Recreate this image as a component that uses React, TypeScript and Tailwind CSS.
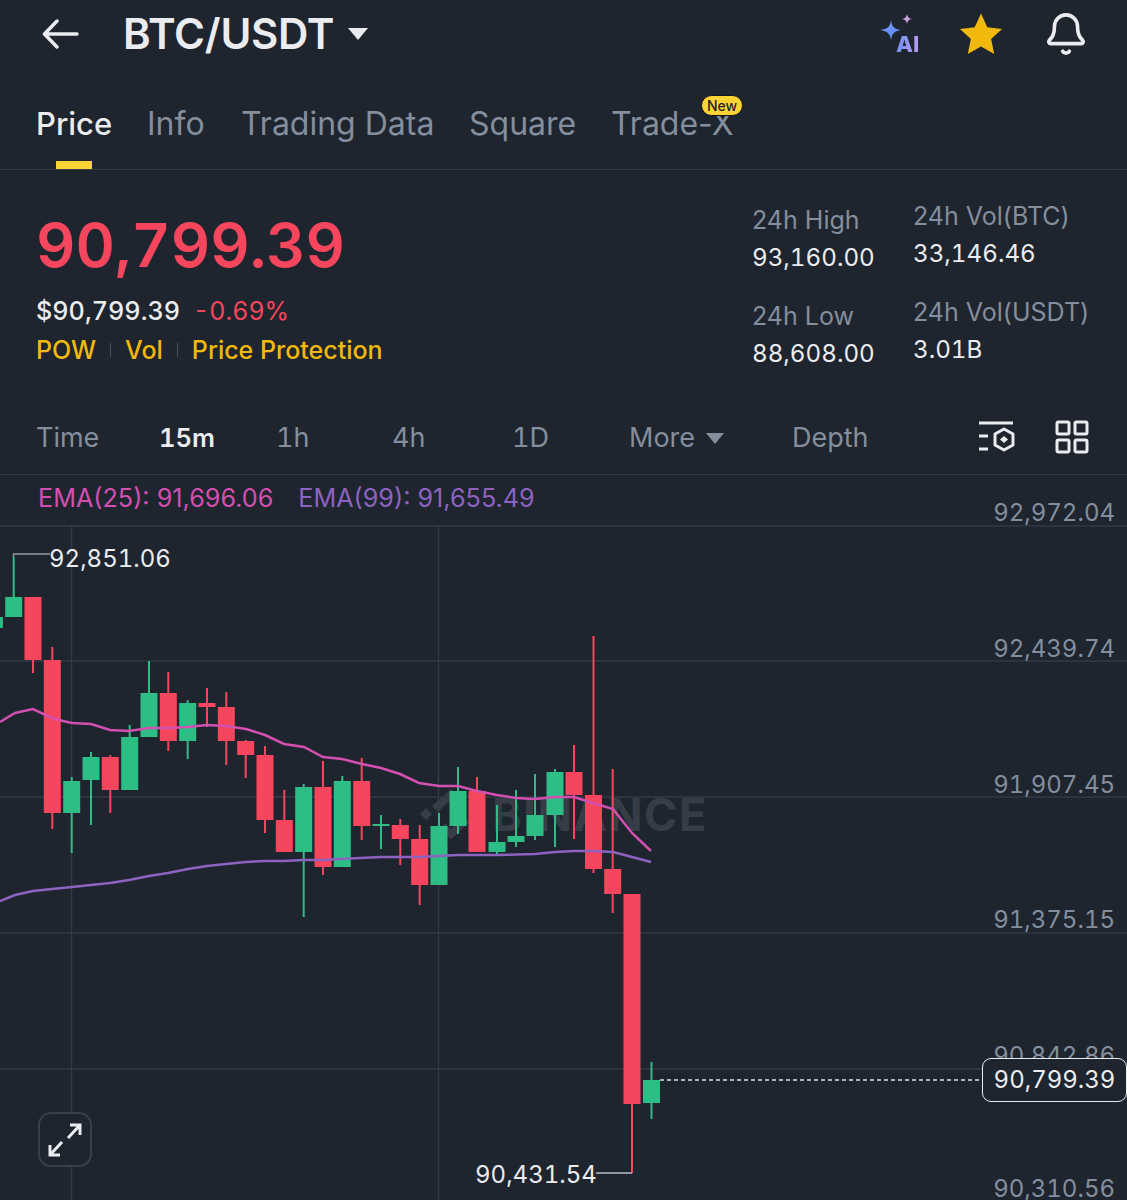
import React from 'react';
import { Bell } from 'lucide-react';

type Candle = [number, number, number, number, number];

// x centre, high, body top, body bottom, low -> all in page pixels
const greens: Candle[] = [
  [-5.6, 617, 617, 628, 628],
  [13.7, 557, 597, 617, 617],
  [71.7, 777, 781, 813, 853],
  [91, 752, 757, 780, 825],
  [129.7, 725, 737, 790, 790],
  [149, 661, 693, 737, 737],
  [187.7, 700, 703, 741, 759],
  [303.7, 784, 787, 852, 917],
  [342.3, 776, 781, 867, 867],
  [381, 815, 824, 826, 849],
  [439, 813, 826, 885, 885],
  [458, 767, 791, 826, 834],
  [497, 805, 842, 852, 855],
  [516, 790, 836, 842, 847],
  [535, 774, 815, 836, 840],
  [555, 769, 772, 815, 847],
  [651.5, 1062, 1080, 1103, 1119],
];

const reds: Candle[] = [
  [33, 597, 597, 660, 673],
  [52.3, 647, 660, 813, 829],
  [110.3, 755, 757, 790, 813],
  [168.3, 672, 693, 741, 751],
  [207, 688, 703, 707, 727],
  [226.3, 692, 707, 741, 765],
  [245.7, 740, 741, 755, 778],
  [265, 746, 755, 820, 833],
  [284.3, 790, 820, 852, 852],
  [323, 761, 787, 867, 875],
  [361.7, 758, 781, 826, 840],
  [400.3, 819, 825, 839, 865],
  [419.7, 825, 839, 885, 905],
  [477, 777, 791, 852, 852],
  [574, 745, 772, 795, 839],
  [593.5, 636, 795, 869, 873],
  [612.7, 769, 869, 894, 913],
  [632, 894, 894, 1104, 1173],
];

const ema25 =
  '0,722 15,713 33,709 52,718 63,721 72,723 91,724 110,730 129,731 149,728 168,728 188,727 207,725 226,726 246,729 265,735 284,744 304,747 323,757 342,759 362,764 381,768 400,774 419,783 439,786 458,786 477,791 497,795 516,798 535,799 555,797 574,797 593,803 613,809 632,833 651,851';
const ema99 =
  '0,901 15,895 33,891 52,889 72,887 91,885 110,883 129,880 149,876 168,873 188,869 207,866 226,864 246,862 265,861 284,861 304,860 323,860 340,859 381,857 419,857 458,855 497,855 535,854 555,852 574,851 593,851 613,852 632,857 651,862';

const CandleMark = ({ c, color }: { c: Candle; color: string }) => (
  <g fill={color}>
    <rect x={c[0] - 1} y={c[1]} width={2} height={c[4] - c[1]} />
    <rect x={c[0] - 8.5} y={c[2]} width={17} height={c[3] - c[2]} />
  </g>
);

const axisLabels = [
  { text: '92,972.04', cls: 'top-[23px]' },
  { text: '92,439.74', cls: 'top-[159px]' },
  { text: '91,907.45', cls: 'top-[295px]' },
  { text: '91,375.15', cls: 'top-[430px]' },
  { text: '90,842.86', cls: 'top-[566px]' },
  { text: '90,310.56', cls: 'top-[699px]' },
];

const Chart = () => (
  <div className="relative h-[725px] overflow-hidden">
    <div className="absolute left-[418px] top-[314px] flex items-center gap-[8px] text-[#373d47]">
      <svg width="66" height="50" viewBox="0 0 66 50" fill="currentColor">
        <path d="M33 0 45 10 39 16 33 10 20 23 14 17Z" />
        <path d="M8 19 14 25 8 31 2 25Z" />
        <path d="M33 50 21 40 27 34 33 40 46 27 52 33Z" />
      </svg>
      <span className="text-[45px] leading-none font-bold tracking-[1.500px]">BINANCE</span>
    </div>

    <svg className="absolute inset-0" width="1127" height="725" viewBox="0 475 1127 725" fill="none">
      <g stroke="#343a45" strokeWidth="1.5">
        <path d="M0 526H1127M0 661H1127M0 797H1127M0 933H1127M0 1069H1127" />
        <path d="M71.5 526V1200M438.5 526V1200" />
      </g>
      {greens.map((c) => (
        <CandleMark key={c[0]} c={c} color="#2ebd85" />
      ))}
      {reds.map((c) => (
        <CandleMark key={c[0]} c={c} color="#f6465d" />
      ))}
      <polyline points={ema25} stroke="#d34fb0" strokeWidth="2.5" />
      <polyline points={ema99} stroke="#8e62c0" strokeWidth="2.5" />
      <path d="M13.5 557V554H50" stroke="#8e98a4" strokeWidth="1.5" />
      <path d="M632 1173H596" stroke="#b7bdc6" strokeWidth="1.5" />
      <path d="M660 1080H982" stroke="#dfe2e6" strokeWidth="1.5" strokeDasharray="4 3" />
    </svg>

    <div className="absolute left-[38px] top-[8px] flex gap-[25px] text-[25.200px] leading-[30px]">
      <span className="text-[#d34fb0]">EMA(25): 91,696.06</span>
      <span className="text-[#8e62c0]">EMA(99): 91,655.49</span>
    </div>

    {axisLabels.map((l) => (
      <span key={l.text} className={`absolute right-[12px] text-[24px] leading-[30px] text-[#848e9c] tabular-nums ${l.cls}`}>
        {l.text}
      </span>
    ))}

    <span className="absolute left-[49px] top-[69px] text-[24px] leading-[30px] text-[#eaecef] tabular-nums">92,851.06</span>
    <span className="absolute left-[475px] top-[685px] text-[24px] leading-[30px] text-[#eaecef] tabular-nums">90,431.54</span>

    <div className="absolute left-[982px] top-[583px] flex h-[44px] w-[145px] items-center justify-center rounded-[9px] border-[1.5px] border-[#eaecef] bg-[#1e252e] text-[24px] text-[#eaecef] tabular-nums">
      90,799.39
    </div>

    <div className="absolute left-[38px] top-[637px] flex h-[55px] w-[54px] items-center justify-center rounded-[13px] border-2 border-[#3a404b] bg-[#1e252e]">
      <svg width="36" height="36" viewBox="0 0 36 36" fill="none" stroke="#eaecef" strokeWidth="3">
        <path d="M21 16 33 3M23 3H33V13" />
        <path d="M15 20 3 33M3 23V33H13" />
      </svg>
    </div>
  </div>
);

const App: React.FC = () => {
  return (
    <div className="h-[1200px] w-[1127px] overflow-hidden bg-[#1e252e] font-['Inter',sans-serif] text-[#eaecef]">
      {/* Top bar */}
      <div className="flex h-[68px] items-center pl-[42px] pr-[38px]">
        <svg width="37" height="30" viewBox="0 0 37 30" fill="none" stroke="#eaecef" strokeWidth="3.5" strokeLinecap="round" strokeLinejoin="round">
          <path d="M35 15H3M15 2 2.5 15 15 28" />
        </svg>
        <span className="ml-[44px] text-[42px] leading-none font-semibold tracking-[-0.3px]">BTC/USDT</span>
        <svg className="ml-[13px]" width="22" height="14" viewBox="0 0 22 14" fill="#eaecef">
          <path d="M1 1H21L11 13Z" />
        </svg>

        <div className="ml-auto flex items-center">
          <div className="relative h-[40px] w-[40px]">
            <svg className="absolute inset-0" width="40" height="40" viewBox="0 0 40 40">
              <defs>
                <linearGradient id="spark" x1="0" y1="0" x2="1" y2="1">
                  <stop offset="0" stopColor="#7aa2ff" />
                  <stop offset="1" stopColor="#5b7cf5" />
                </linearGradient>
              </defs>
              <path d="M11 6C12 13 14 15 21 16 14 17 12 20 11 26 10 20 8 17 0 16 8 15 10 13 11 6Z" fill="url(#spark)" />
              <path d="M27 0C27.500 3 29 4.500 32 5 29 5.500 27.500 7 27 10 26.500 7 25 5.500 22 5 25 4.500 26.500 3 27 0Z" fill="#c9a0dc" />
            </svg>
            <span className="absolute left-[16px] top-[19px] bg-gradient-to-r from-[#6f8ff7] to-[#b79cf0] bg-clip-text text-[22px] leading-none font-extrabold text-transparent">
              AI
            </span>
          </div>
          <svg className="ml-[38px]" width="46" height="44" viewBox="0 0 24 23" fill="#f0b90b">
            <path d="M12 .8 15.300 8 23 8.900 17.300 14.100 18.900 22 12 18 5.100 22 6.700 14.100 1 8.900 8.700 8Z" />
          </svg>
          <Bell className="ml-[39px]" size={46} strokeWidth={1.9} color="#eaecef" />
        </div>
      </div>

      {/* Tabs */}
      <div className="relative flex h-[102px] items-start border-b border-[#343a45] pl-[36px] pt-[36px] text-[32px] leading-[40px] text-[#848e9c]">
        <div className="relative w-[111px] text-[31px] font-medium text-[#eaecef]">
          Price
          <div className="absolute left-[20px] top-[57px] h-[8px] w-[36px] bg-[#fcd535]" />
        </div>
        <div className="w-[94px]">Info</div>
        <div className="w-[228px]">Trading Data</div>
        <div className="w-[142px]">Square</div>
        <div className="relative">
          Trade-X
          <span className="absolute left-[90px] top-[-9px] rounded-full border border-[#12161c] bg-[#fcd535] px-[5px] text-[14px] leading-[19px] font-medium text-[#1e2329]">
            New
          </span>
        </div>
      </div>

      {/* Ticker */}
      <div className="flex h-[236px] pl-[36px]">
        <div className="w-[716px] pt-[37px]">
          <div className="text-[61px] leading-[76px] font-semibold text-[#f6465d] tabular-nums">90,799.39</div>
          <div className="mt-[11px] flex items-baseline gap-[13px] leading-[34px] tabular-nums">
            <span className="text-[25.200px] font-medium">$90,799.39</span>
            <span className="text-[25px] text-[#f6465d]">-0.69%</span>
          </div>
          <div className="mt-[5px] flex items-center gap-[14px] text-[25px] leading-[34px] font-medium text-[#f0b90b]">
            <span>POW</span>
            <span className="h-[14px] w-px bg-[#4a4f57]" />
            <span>Vol</span>
            <span className="h-[14px] w-px bg-[#4a4f57]" />
            <span>Price Protection</span>
          </div>
        </div>
        <div className="w-[161px] pt-[33px] text-[25px] leading-[34px] whitespace-nowrap">
          <div className="text-[#848e9c]">24h High</div>
          <div className="mt-[4px] text-[24.200px] tabular-nums">93,160.00</div>
          <div className="mt-[24px] text-[#848e9c]">24h Low</div>
          <div className="mt-[4px] text-[24.200px] tabular-nums">88,608.00</div>
        </div>
        <div className="pt-[29px] text-[25px] leading-[34px] whitespace-nowrap">
          <div className="text-[#848e9c]">24h Vol(BTC)</div>
          <div className="mt-[4px] text-[24.200px] tabular-nums">33,146.46</div>
          <div className="mt-[24px] text-[#848e9c]">24h Vol(USDT)</div>
          <div className="mt-[4px] text-[24.200px] tabular-nums">3.01B</div>
        </div>
      </div>

      {/* Interval row */}
      <div className="flex h-[69px] items-center border-b border-[#343a45] pb-[3px] pl-[36px] text-[27px] text-[#848e9c] tabular-nums">
        <div className="w-[123px]">Time</div>
        <div className="w-[117px] text-[25.500px] font-semibold text-[#eaecef]">15m</div>
        <div className="w-[116px]">1h</div>
        <div className="w-[120px]">4h</div>
        <div className="w-[117px]">1D</div>
        <div className="flex w-[163px] items-center gap-[11px]">
          More
          <svg width="18" height="11" viewBox="0 0 18 11" fill="#848e9c">
            <path d="M0 0H18L9 11Z" />
          </svg>
        </div>
        <div className="w-[187px]">Depth</div>
        <svg className="mt-[-3px] w-[76px]" width="76" height="36" viewBox="0 0 76 36" fill="none" stroke="#eaecef" strokeWidth="3">
          <path d="M0 4H34M0 17H9M0 30H9" />
          <path d="M25 10 34 15V26L25 31 16 26V15Z" strokeLinejoin="round" />
          <path d="M25 17 29 20.500 25 24 21 20.500Z" fill="#eaecef" stroke="none" />
        </svg>
        <svg className="mt-[-3px]" width="34" height="34" viewBox="0 0 34 34" fill="none" stroke="#eaecef" strokeWidth="3">
          <rect x="2" y="2" width="12" height="12" rx="1.500" />
          <rect x="20" y="2" width="12" height="12" rx="1.500" />
          <rect x="2" y="20" width="12" height="12" rx="1.500" />
          <rect x="20" y="20" width="12" height="12" rx="1.500" />
        </svg>
      </div>

      <Chart />
    </div>
  );
};

export default App;
